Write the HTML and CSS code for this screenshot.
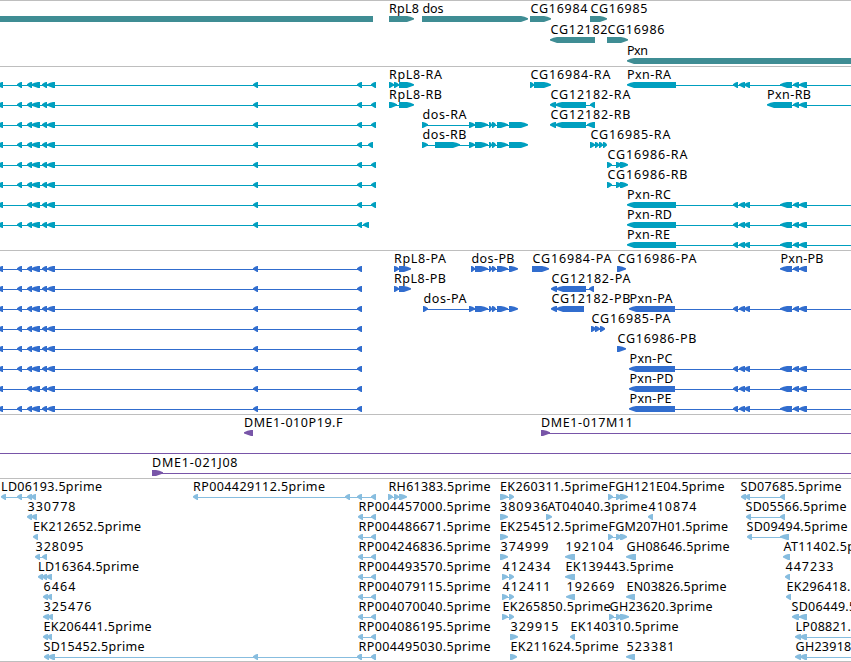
FILE: index.html
```html
<!DOCTYPE html>
<html lang="en">
<head>
<meta charset="utf-8">
<title>Genome annotation tracks</title>
<link rel="stylesheet" href="styles.css">
</head>
<body>
<main class="browser">
  <section class="track genes"><svg width="851" height="65" data-track="genes"></svg></section>
  <section class="track transcripts"><svg width="851" height="183" data-track="transcripts"></svg></section>
  <section class="track proteins"><svg width="851" height="163" data-track="proteins"></svg></section>
  <section class="track clones"><svg width="851" height="63" data-track="clones"></svg></section>
  <section class="track ests"><svg width="851" height="182" data-track="ests"></svg></section>
</main>
<script src="tracks.js"></script>
</body>
</html>
```

FILE: styles.css
```css
body {
  margin: 0;
  background: #fff;
  overflow: hidden;
}

.browser {
  display: flex;
  flex-direction: column;
  width: 851px;
  height: 661px;
  border-bottom: 1px solid #bebebe;
}

.track {
  border-top: 1px solid #bebebe;
  flex: none;
}

.track svg {
  display: block;
}

.track text {
  font: 12.5px "Noto Sans", "DejaVu Sans", sans-serif;
  fill: #000;
}

.genes { color: #3f8d94; }
.transcripts { color: #009fbf; }
.proteins { color: #316dce; }
.clones { color: #7855a8; }
.ests { color: #87bddf; }

.shape { fill: currentColor; }
```

FILE: tracks.js
```javascript
// Label advance widths in pixels.
const ADVANCE = {
  A: 8, B: 8, C: 8, D: 9, E: 7, F: 6, G: 9, H: 9, J: 4, K: 8, L: 7, M: 10.5, P: 7, R: 8, S: 7, T: 7,
  d: 8, e: 7, i: 3, m: 11, n: 7, o: 7, p: 7, r: 5, s: 6, x: 7, '.': 4, '-': 7
};
const NS = 'http://www.w3.org/2000/svg';

function add(svg, name, attrs) {
  const el = document.createElementNS(NS, name);
  for (const key in attrs) el.setAttribute(key, attrs[key]);
  svg.appendChild(el);
  return el;
}

// Block outline with a tapered head; tip is the pointed end, tail the flat one.
function arrow(tip, tail, y) {
  const w = Math.abs(tail - tip);
  const s = Math.sign(tail - tip);
  const h = w <= 6 ? w - 1 : Math.min(7, w - 2);
  return [
    [tip, 2.2], [tip + s * h * 0.5, 0.8], [tip + s * h, 0], [tail, 0],
    [tail, 6], [tip + s * h, 6], [tip + s * h * 0.5, 4.8], [tip, 3.6]
  ].map(p => p[0] + ',' + (y + p[1])).join(' ');
}

// Feature: [row top, direction, blocks, label, label x, line end]
function draw(name, origin, features) {
  const svg = document.querySelector('[data-track="' + name + '"]');
  for (const [top, dir, blocks, label, labelX, lineEnd] of features) {
    const y = top - origin;
    const start = blocks[0][0];
    const end = lineEnd || blocks[blocks.length - 1][1];
    if (blocks.length > 1 || lineEnd) {
      add(svg, 'rect', { class: 'shape', x: start + 2, y: y + 3, width: end - start - 3, height: 1 });
    }
    for (const [a, b] of blocks) {
      if (dir === '') add(svg, 'rect', { class: 'shape', x: a, y, width: b - a, height: 6 });
      else add(svg, 'polygon', { class: 'shape', points: dir === '<' ? arrow(a, b, y) : arrow(b, a, y) });
    }
    if (label) {
      const width = [...label].reduce((sum, c) => sum + (ADVANCE[c] || 8), 0);
      add(svg, 'text', { x: labelX + 0.5, y: y - 3, textLength: width }).textContent = label;
    }
  }
}

draw('genes', 1, [
  [16, '', [[0, 373]]],
  [16, '>', [[389, 414]], 'RpL8', 388.5],
  [16, '>', [[422, 528]], 'dos', 422],
  [16, '>', [[530, 551]], 'CG16984', 530],
  [16, '>', [[590, 607]], 'CG16985', 590],
  [37, '<', [[550, 595]], 'CG12182', 550],
  [37, '>', [[607, 628]], 'CG16986', 607],
  [58, '<', [[627, 860]], 'Pxn', 626.5]
]);

const LEFT = [[-3, 3], [17, 22], [27, 32], [31, 40], [42, 47], [47, 55], [253, 258]];
const LEFT_SHORT = LEFT.filter(b => b[0] !== 17);
const DOS = [[469, 475], [475, 488], [489, 492], [492, 496], [497, 508]];
const PXN_MID = [[733, 738], [739, 745], [744, 750]];
const PXN_END = [[793, 799], [799, 807]];
const PXN = [...PXN_MID, [780, 792], ...PXN_END];

const transcripts = [];
for (let i = 0; i < 8; i++) {
  const tail = i === 3 ? [368, 373] : i === 7 ? [363, 369] : [371, 376];
  transcripts.push([82 + 20 * i, '<', [...(i === 6 ? LEFT_SHORT : LEFT), [357, 362], tail]]);
}
transcripts.push(
  [82, '>', [[389, 394], [394, 399], [399, 414]], 'RpL8-RA', 388.5],
  [102, '>', [[389, 397], [399, 414]], 'RpL8-RB', 388.5],
  [122, '>', [[422, 428], ...DOS, [509, 528]], 'dos-RA', 422],
  [142, '>', [[422, 428], [435, 460], ...DOS, [509, 528]], 'dos-RB', 422],
  [82, '>', [[530, 534], [534, 551]], 'CG16984-RA', 530],
  [102, '<', [[550, 556], [555, 586], [590, 595]], 'CG12182-RA', 550],
  [122, '<', [[550, 556], [555, 586], [587, 595]], 'CG12182-RB', 550],
  [142, '>', [[590, 595], [595, 599], [599, 603], [603, 607]], 'CG16985-RA', 590],
  [162, '>', [[607, 612], [616, 622], [620, 628]], 'CG16986-RA', 607],
  [182, '>', [[607, 612], [616, 622], [620, 628]], 'CG16986-RB', 607],
  [82, '<', [[627, 676], ...PXN], 'Pxn-RA', 626.5, 853],
  [102, '<', [[767, 792], ...PXN_END], 'Pxn-RB', 766.5, 853],
  [202, '<', [[627, 676], ...PXN], 'Pxn-RC', 626.5, 853],
  [222, '<', [[627, 676], ...PXN], 'Pxn-RD', 626.5, 853],
  [242, '<', [[627, 676], ...PXN], 'Pxn-RE', 626.5, 853]
);
draw('transcripts', 67, transcripts);

const proteins = [];
for (let i = 0; i < 8; i++) {
  proteins.push([266 + 20 * i, '<', [...(i === 6 ? LEFT_SHORT : LEFT), [357, 362]]]);
}
proteins.push(
  [266, '>', [[394, 399], [399, 411]], 'RpL8-PA', 393.5],
  [286, '>', [[394, 399], [399, 411]], 'RpL8-PB', 393.5],
  [266, '>', [[471, 475], ...DOS.slice(1), [509, 518]], 'dos-PB', 471],
  [306, '>', [[423, 428], ...DOS, [509, 518]], 'dos-PA', 423],
  [266, '>', [[532, 549]], 'CG16984-PA', 532],
  [266, '>', [[617, 626]], 'CG16986-PA', 617],
  [286, '<', [[551, 557], [556, 586], [589, 594]], 'CG12182-PA', 551],
  [306, '<', [[551, 557], [556, 584]], 'CG12182-PB', 551],
  [326, '>', [[591, 596], [595, 600], [600, 605]], 'CG16985-PA', 591],
  [346, '>', [[617, 626]], 'CG16986-PB', 617],
  [266, '<', [[780, 792], ...PXN_END], 'Pxn-PB', 780],
  [306, '<', [[629, 675], ...PXN], 'Pxn-PA', 629, 853],
  [366, '<', [[629, 675], ...PXN], 'Pxn-PC', 629, 853],
  [386, '<', [[629, 675], ...PXN], 'Pxn-PD', 629, 853],
  [406, '<', [[629, 675], ...PXN], 'Pxn-PE', 629, 853]
);
draw('proteins', 251, proteins);

draw('clones', 415, [
  [430, '<', [[244, 253]], 'DME1-010P19.F', 243.5],
  [430, '>', [[541, 550]], 'DME1-017M11', 540.5, 853],
  [470, '>', [[152, 163]], 'DME1-021J08', 151.5, 853]
]);
add(document.querySelector('[data-track="clones"]'), 'rect', { class: 'shape', x: 0, y: 38, width: 851, height: 1 });

const ests = [
  [0, '<', [[1, 6], [17, 22], [27, 32], [31, 36]], 'LD06193.5prime', 0.5],
  [0, '<', [[193, 198], [345, 350], [357, 362], [371, 376]], 'RP004429112.5prime', 192.5],
  [0, '>', [[388, 393], [394, 399], [399, 407]], 'RH61383.5prime', 388],
  [0, '>', [[500, 508], [509, 514]], 'EK260311.5prime', 499.5],
  [0, '>', [[608, 613], [616, 622], [620, 628]], 'FGH121E04.5prime', 608],
  [0, '<', [[741, 746], [745, 750], [780, 785]], 'SD07685.5prime', 740],
  [1, '<', [[27, 32], [31, 37]], '330778', 27],
  [1, '>', [[500, 508]], '380936', 499.5],
  [1, '>', [[546, 552]], 'AT04040.3prime', 547],
  [1, '<', [[648, 653]], '410874', 648],
  [1, '<', [[746, 751], [780, 785]], 'SD05566.5prime', 745],
  [2, '<', [[33, 38]], 'EK212652.5prime', 32.5],
  [2, '>', [[500, 508]], 'EK254512.5prime', 499.5],
  [2, '>', [[608, 613], [616, 622], [620, 627]], 'FGM207H01.5prime', 608],
  [2, '<', [[747, 752], [780, 789]], 'SD09494.5prime', 746],
  [3, '<', [[35, 40], [42, 47]], '328095', 35],
  [3, '>', [[500, 508]], '374999', 500],
  [3, '<', [[565, 575]], '192104', 565],
  [3, '<', [[626, 636]], 'GH08646.5prime', 626],
  [3, '<', [[783, 790]], 'AT11402.5prime', 783],
  [4, '<', [[38, 43], [42, 47], [46, 52]], 'LD16364.5prime', 37.5],
  [4, '>', [[502, 508], [509, 514]], '412434', 502],
  [4, '<', [[565, 575]], 'EK139443.5prime', 565],
  [4, '<', [[785, 790]], '447233', 785],
  [5, '<', [[43, 48], [47, 52]], '6464', 43],
  [5, '>', [[502, 508], [509, 514]], '412411', 502],
  [5, '<', [[566, 575]], '192669', 566],
  [5, '<', [[626, 635]], 'EN03826.5prime', 626],
  [5, '<', [[786, 791]], 'EK296418.5prime', 786],
  [6, '<', [[43, 49], [48, 53]], '325476', 43],
  [6, '>', [[502, 508], [509, 514]], 'EK265850.5prime', 502],
  [6, '>', [[609, 614], [616, 622], [620, 629]], 'GH23620.3prime', 609],
  [6, '<', [[792, 799], [799, 807]], 'SD06449.5prime', 791],
  [7, '<', [[43, 48], [47, 52]], 'EK206441.5prime', 43],
  [7, '>', [[510, 518]], '329915', 510],
  [7, '<', [[570, 575]], 'EK140310.5prime', 570],
  [7, '<', [[795, 801], [800, 807]], 'LP08821.5prime', 795, 853],
  [8, '<', [[44, 49], [48, 55], [253, 258], [357, 362], [371, 376]], 'SD15452.5prime', 43],
  [8, '>', [[510, 517]], 'EK211624.5prime', 510],
  [8, '<', [[626, 635]], '523381', 626],
  [8, '<', [[795, 801], [800, 807]], 'GH23918.5prime', 795, 853]
];
['04457000', '04486671', '04246836', '04493570', '04079115', '04070040', '04086195'].forEach((id, i) => {
  ests.push([i + 1, '<', [[358, 363], [371, 376]], 'RP0' + id + '.5prime', 358]);
});
ests.push([8, '<', [[357, 362], [371, 376]], 'RP004495030.5prime', 358]);
draw('ests', 479, ests.map(([row, ...rest]) => [494 + 20 * row, ...rest]));
```
